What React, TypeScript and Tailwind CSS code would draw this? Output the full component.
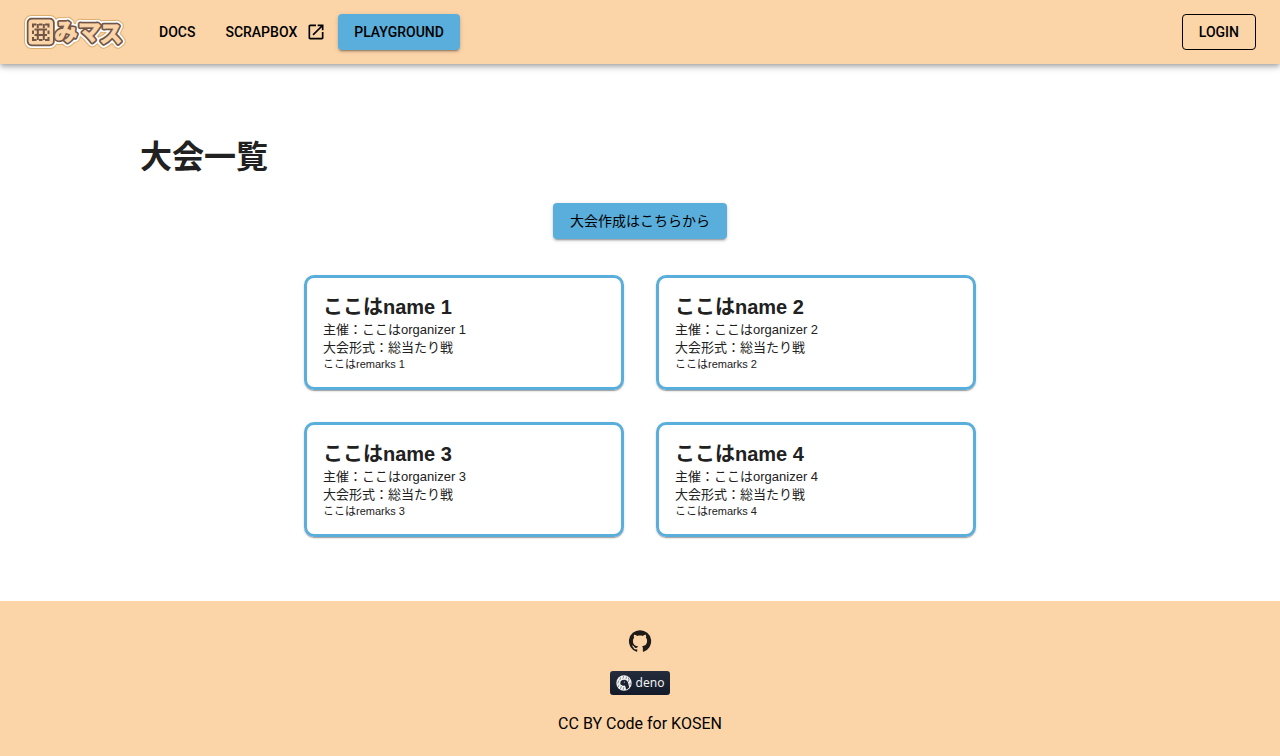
const tournaments = [1, 2, 3, 4].map((n) => ({
  id: n,
  name: `ここはname ${n}`,
  organizer: `ここはorganizer ${n}`,
  type: "総当たり戦",
  remarks: `ここはremarks ${n}`,
}));

function Logo() {
  return (
    <svg viewBox="0 0 102 34" className="h-[34px] w-[102px]" role="img" aria-label="囲みマス">
      <defs>
        <g id="logo-shape" strokeLinejoin="round">
          <rect x="5" y="5" width="23.500" height="24" rx="2.500" />
          <g
            fontFamily="'Noto Sans CJK JP', sans-serif"
            fontWeight="700"
            fontSize="23"
          >
            <text x="30.500" y="25">み</text>
            <text x="54" y="24.500">マ</text>
            <text x="75.500" y="27">ス</text>
          </g>
        </g>
      </defs>
      <use href="#logo-shape" fill="#dcae6c" stroke="#dcae6c" strokeWidth="10" />
      <use href="#logo-shape" fill="#fff" stroke="#fff" strokeWidth="8" />
      <use href="#logo-shape" fill="#715647" stroke="#715647" strokeWidth="4.500" />
      <use href="#logo-shape" fill="#fbd4a8" stroke="#fbd4a8" strokeWidth="1" />
      <g fill="none" stroke="#715647" strokeWidth="2">
        <path d="M9 12.500V9.500h3.500M21 9.500h3.500v3M9 22v3h3.500M21 25h3.500v-3M15 9.500h3.500M15 25h3.500M9 15.500v3.500M24.500 15.500v3.500" />
        <path d="M13.800 9v4M13.800 14.500v5M13.800 21v4M19.800 9v4M19.800 14.500v5M19.800 21v4" />
        <path d="M10.500 14.500h12.500M10.500 20h12.500" />
      </g>
    </svg>
  );
}

function OpenInNewIcon() {
  return (
    <svg viewBox="0 0 24 24" className="size-5 fill-current" aria-hidden="true">
      <path d="M19 19H5V5h7V3H5c-1.110 0-2 .9-2 2v14c0 1.100.89 2 2 2h14c1.100 0 2-.9 2-2v-7h-2zM14 3v2h3.590l-9.830 9.830 1.410 1.410L19 6.410V10h2V3z" />
    </svg>
  );
}

function GitHubIcon() {
  return (
    <svg viewBox="0 0 24 24" className="size-6 fill-[#1f1b18]" aria-hidden="true">
      <path d="M12 1.27a11 11 0 00-3.48 21.46c.55.09.73-.28.73-.55v-1.84c-3.03.64-3.67-1.46-3.67-1.46-.55-1.29-1.28-1.65-1.28-1.65-.92-.65.1-.65.1-.65 1.1 0 1.73 1.1 1.73 1.1.92 1.65 2.57 1.2 3.21.92a2 2 0 01.64-1.47c-2.47-.27-5.04-1.19-5.04-5.5 0-1.1.46-2.1 1.2-2.84a3.76 3.76 0 010-2.93s.91-.28 3.11 1.1c1.8-.49 3.7-.49 5.5 0 2.1-1.38 3.02-1.1 3.02-1.1a3.76 3.76 0 01.1 2.93c.83.74 1.2 1.74 1.2 2.94 0 4.21-2.57 5.13-5.04 5.4.45.37.82.92.82 2.02v3.03c0 .27.1.64.73.55A11 11 0 0012 1.27" />
    </svg>
  );
}

function DenoIcon() {
  return (
    <svg viewBox="0 0 16 16" className="size-4" aria-hidden="true">
      <circle cx="8" cy="8" r="7.700" fill="#f4f4f4" />
      <g stroke="#1b2231" strokeWidth="0.500" strokeLinecap="round">
        <path d="M4.500 2.800l-.6 2M7.500 1.500l-.5 1.800M10.500 2l-.5 1.800M13 4.500l-.5 2M2.500 6l-.6 2.200M3 10l-.5 1.500M5.200 11.500l-.6 2.300M7.700 12.500l-.5 2M14.300 8l-.4 1.800M12.800 2.800l-.3 1" />
      </g>
      <path
        d="M4.300 8c0-2 1.700-3.200 3.900-3.200 2.300 0 3.600 1.400 4 3.500l1 4.200c-.9 1-2 1.800-3.200 2.200-.2-1.700-.5-3-1.100-4.100-.8.300-1.600.3-2.300.2-.3-.6-.8-.6-1.300-.8-.7-.3-1-.9-1-2z"
        fill="#1b2231"
      />
      <circle cx="8.300" cy="7.100" r="0.500" fill="#f4f4f4" />
    </svg>
  );
}

export default function App() {
  return (
    <div className="flex min-h-screen flex-col bg-white font-['Liberation_Sans','Noto_Sans_CJK_JP',sans-serif] text-[#212121]">
      <header className="flex h-16 items-center justify-between bg-[#fbd4a8] px-6 font-['Roboto',sans-serif] text-sm font-medium text-black shadow-[0_2px_4px_-1px_rgba(0,0,0,0.2),0_4px_5px_0_rgba(0,0,0,0.14),0_1px_10px_0_rgba(0,0,0,0.12)]">
        <div className="flex items-center gap-[17px]">
          <a href="#">
            <Logo />
          </a>
          <nav className="flex items-center">
            <a href="#docs" className="flex h-9 items-center rounded px-4">
              DOCS
            </a>
            <a href="#scrapbox" className="flex h-9 items-center gap-[9px] rounded pr-3 pl-3.5">
              SCRAPBOX
              <OpenInNewIcon />
            </a>
            <a
              href="#playground"
              className="flex h-9 items-center rounded bg-[#5aaedb] px-4 shadow-[0_3px_1px_-2px_rgba(0,0,0,0.2),0_2px_2px_0_rgba(0,0,0,0.14),0_1px_5px_0_rgba(0,0,0,0.12)]"
            >
              PLAYGROUND
            </a>
          </nav>
        </div>
        <button type="button" className="h-9 rounded border border-black px-4">
          LOGIN
        </button>
      </header>

      <main className="mx-auto flex w-full max-w-[1000px] flex-1 flex-col items-center pt-[69px] pb-16">
        <h1 className="self-start text-[32px] leading-12 font-bold">大会一覧</h1>
        <a
          href="#create"
          className="mt-[22px] flex h-9 items-center rounded bg-[#5aaedb] px-[17px] font-['Roboto','Noto_Sans_CJK_JP',sans-serif] text-sm text-black shadow-[0_3px_1px_-2px_rgba(0,0,0,0.2),0_2px_2px_0_rgba(0,0,0,0.14),0_1px_5px_0_rgba(0,0,0,0.12)]"
        >
          大会作成はこちらから
        </a>
        <div className="mt-9 grid w-full max-w-2xl grid-cols-2 gap-8">
          {tournaments.map((t) => (
            <a
              key={t.id}
              href={`#tournament-${t.id}`}
              className="block rounded-[10px] border-3 border-[#5aaedb] p-4 shadow-[0_2px_1px_-1px_rgba(0,0,0,0.2),0_1px_1px_0_rgba(0,0,0,0.14),0_1px_3px_0_rgba(0,0,0,0.12)]"
            >
              <h2 className="text-xl leading-[27px] font-bold">{t.name}</h2>
              <p className="text-[13px] leading-[18px]">主催：{t.organizer}</p>
              <p className="text-[13px] leading-[18px]">大会形式：{t.type}</p>
              <p className="text-[11px] leading-[14px]">{t.remarks}</p>
            </a>
          ))}
        </div>
      </main>

      <footer className="flex flex-col items-center bg-[#fbd4a8] pt-7 pb-5 text-black">
        <a href="#github" aria-label="GitHub">
          <GitHubIcon />
        </a>
        <a
          href="#deno"
          className="mt-[18px] flex h-6 w-15 items-center justify-center gap-1 rounded-[3px] bg-linear-to-b from-[#252d3c] to-[#131a29] text-[#f0f0f0]"
        >
          <DenoIcon />
          <span className="font-['Noto_Sans',sans-serif] text-xs">deno</span>
        </a>
        <p className="mt-[17px] font-['Roboto',sans-serif] text-base">CC BY Code for KOSEN</p>
      </footer>
    </div>
  );
}
